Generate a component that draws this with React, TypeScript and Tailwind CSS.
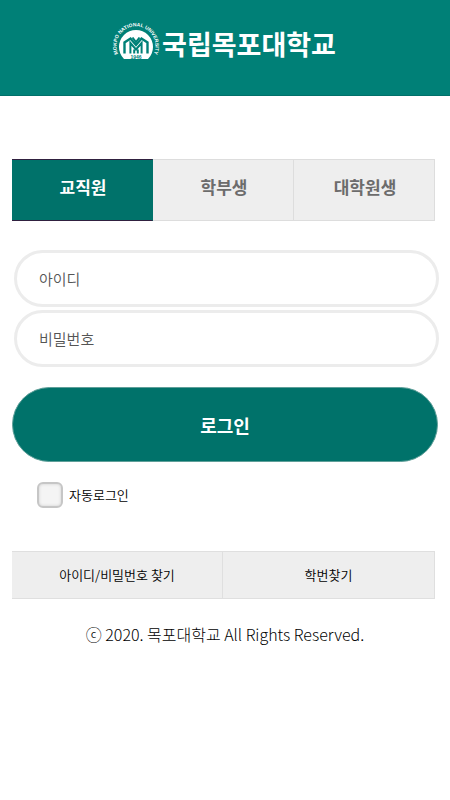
import React, { useState } from 'react';
import clsx from 'clsx';

const tabs = ['교직원', '학부생', '대학원생'];

const Emblem: React.FC = () => (
  <svg className="h-10 w-12 shrink-0" viewBox="0 0 48 40" fill="none" aria-hidden="true">
    <defs>
      <path id="ring" d="M9.1 36.5 A19.5 19.5 0 1 1 38.9 36.5" />
    </defs>
    <text fill="#fff" fontSize="5" fontWeight="700" fontFamily="Liberation Sans, sans-serif">
      <textPath href="#ring" startOffset="50%" textAnchor="middle">MOKPO NATIONAL UNIVERSITY</textPath>
    </text>
    <path d="M12 37 A17 17 0 1 1 36 37 Z" fill="#fff" />
    <path d="M12.5 31.5V20.5l6-4 5.5 6.5 5.5-6.5 6 4V31.5" stroke="#008077" strokeWidth="2.4" />
    <path d="M18.4 31.5V21l5.600 6.500 5.600-6.500v10.5M22.200 31.500v-4M25.800 31.500v-4M20.500 15.500l3.500 4.500 3.500-4.500" stroke="#008077" strokeWidth="2" />
    <text x="24" y="36.500" fill="#008077" fontSize="5" fontWeight="700" textAnchor="middle" fontFamily="Liberation Sans, sans-serif">1946</text>
  </svg>
);

const Header: React.FC = () => (
  <header className="flex h-24 items-center justify-center gap-0.5 border-b border-[#00706a] bg-[#008077] pr-0.5 pb-3">
    <Emblem />
    <h1 className="pt-1 text-[27px] leading-9 font-bold text-white">국립목포대학교</h1>
  </header>
);

export default function App() {
  const [active, setActive] = useState(0);

  return (
    <div className="min-h-screen bg-white font-['Noto_Sans_CJK_KR',sans-serif] text-black">
      <Header />
      <main className="px-3 pt-[63px]">
        <nav className="mr-[3px] grid grid-cols-3">
          {tabs.map((tab, index) => (
            <button
              key={tab}
              type="button"
              onClick={() => setActive(index)}
              className={clsx(
                'h-[62px] border-y border-r pb-1.5 pl-0.5 text-[17px] leading-6 font-bold',
                active === index
                  ? 'border-y-[#30203f] border-r-[#00726a] bg-[#00726a] text-white'
                  : 'border-[#dddddd] bg-[#eeeeee] text-[#6c6c6c]',
              )}
            >
              {tab}
            </button>
          ))}
        </nav>

        <form onSubmit={(e) => e.preventDefault()}>
          <div className="mt-[29px] -mr-px ml-0.5 flex flex-col gap-[3px]">
            <input
              type="text"
              aria-label="아이디"
              placeholder="아이디"
              className="h-[57px] w-full rounded-full border-3 border-[#ececec] px-[22px] text-[15px] font-[350] placeholder:text-[#555555]"
            />
            <input
              type="password"
              aria-label="비밀번호"
              placeholder="비밀번호"
              className="h-[57px] w-full rounded-full border-3 border-[#ececec] px-[22px] text-[15px] font-[350] placeholder:text-[#555555]"
            />
          </div>
          <button
            type="submit"
            className="mt-5 h-[75px] w-full rounded-full border border-[#5f9f99] bg-[#00726a] text-[18px] leading-6 font-bold text-white"
          >
            로그인
          </button>
          <label className="mt-5 ml-[25px] flex w-fit items-center gap-1.5 text-[13px] leading-5 font-[350]">
            <input
              type="checkbox"
              className="size-[26px] appearance-none rounded-md border-2 border-[#c6c6c6] bg-[#f4f4f4] shadow-[inset_0_0_3px_#cccccc] checked:bg-[#00726a]"
            />
            자동로그인
          </label>
        </form>

        <div className="mt-[43px] mr-[3px] grid grid-cols-2 border-y border-r border-[#dfdfdf] bg-[#eeeeee] text-center text-[13px] leading-[46px] font-[350]">
          <a href="#find-account" className="border-r border-[#dfdfdf]">아이디/비밀번호 찾기</a>
          <a href="#find-number">학번찾기</a>
        </div>
      </main>
      <footer className="pt-[23px] text-center text-[16px] leading-6 font-light">
        ⓒ 2020. 목포대학교 All Rights Reserved.
      </footer>
    </div>
  );
}
